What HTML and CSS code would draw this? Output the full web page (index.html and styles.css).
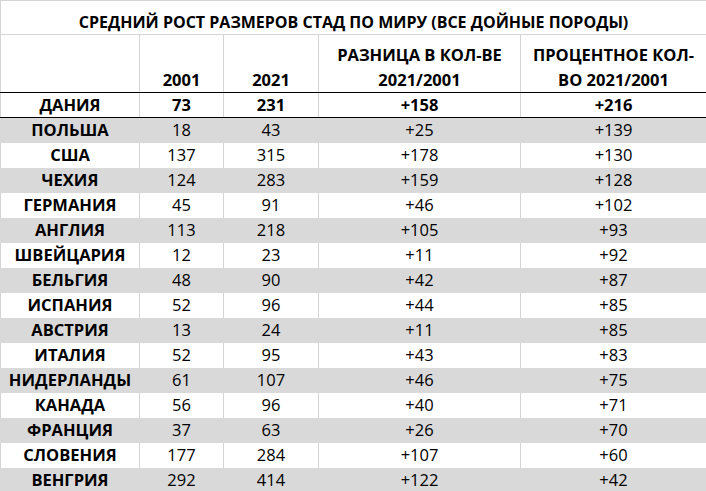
FILE: index.html
```html
<!DOCTYPE html>
<html lang="ru">
<head>
<meta charset="utf-8">
<title>Средний рост размеров стад</title>
<link rel="stylesheet" href="styles.css">
</head>
<body>
<table class="sheet">
  <colgroup>
    <col class="c1"><col class="c2"><col class="c3"><col class="c4"><col class="c5">
  </colgroup>
  <thead>
    <tr class="title-row"><th colspan="5">СРЕДНИЙ РОСТ РАЗМЕРОВ СТАД ПО МИРУ (ВСЕ ДОЙНЫЕ ПОРОДЫ)</th></tr>
    <tr class="head-row">
      <th></th>
      <th>2001</th>
      <th>2021</th>
      <th>РАЗНИЦА В КОЛ-ВЕ<br>2021/2001</th>
      <th>ПРОЦЕНТНОЕ КОЛ-<br>ВО 2021/2001</th>
    </tr>
  </thead>
  <tbody>
    <tr class="lead"><th>ДАНИЯ</th><td>73</td><td>231</td><td>+158</td><td>+216</td></tr>
    <tr class="alt"><th>ПОЛЬША</th><td>18</td><td>43</td><td>+25</td><td>+139</td></tr>
    <tr><th>США</th><td>137</td><td>315</td><td>+178</td><td>+130</td></tr>
    <tr class="alt"><th>ЧЕХИЯ</th><td>124</td><td>283</td><td>+159</td><td>+128</td></tr>
    <tr><th>ГЕРМАНИЯ</th><td>45</td><td>91</td><td>+46</td><td>+102</td></tr>
    <tr class="alt"><th>АНГЛИЯ</th><td>113</td><td>218</td><td>+105</td><td>+93</td></tr>
    <tr><th>ШВЕЙЦАРИЯ</th><td>12</td><td>23</td><td>+11</td><td>+92</td></tr>
    <tr class="alt"><th>БЕЛЬГИЯ</th><td>48</td><td>90</td><td>+42</td><td>+87</td></tr>
    <tr><th>ИСПАНИЯ</th><td>52</td><td>96</td><td>+44</td><td>+85</td></tr>
    <tr class="alt"><th>АВСТРИЯ</th><td>13</td><td>24</td><td>+11</td><td>+85</td></tr>
    <tr><th>ИТАЛИЯ</th><td>52</td><td>95</td><td>+43</td><td>+83</td></tr>
    <tr class="alt"><th>НИДЕРЛАНДЫ</th><td>61</td><td>107</td><td>+46</td><td>+75</td></tr>
    <tr><th>КАНАДА</th><td>56</td><td>96</td><td>+40</td><td>+71</td></tr>
    <tr class="alt"><th>ФРАНЦИЯ</th><td>37</td><td>63</td><td>+26</td><td>+70</td></tr>
    <tr><th>СЛОВЕНИЯ</th><td>177</td><td>284</td><td>+107</td><td>+60</td></tr>
    <tr class="alt last"><th>ВЕНГРИЯ</th><td>292</td><td>414</td><td>+122</td><td>+42</td></tr>
  </tbody>
</table>
</body>
</html>
```
FILE: styles.css
```css
html, body {
  margin: 0;
  padding: 0;
  background: #ffffff;
}

.sheet {
  border-collapse: collapse;
  table-layout: fixed;
  width: 706px;
  font-family: "Open Sans", "Noto Sans", sans-serif;
  font-size: 16.5px;
  color: #000000;
  border-top: 1px solid #d4d4d4;
  border-left: 1px solid #d4d4d4;
}

.c1 { width: 139px; }
.c2 { width: 84px; }
.c3 { width: 95px; }
.c4 { width: 202px; }
.c5 { width: 186px; }

.sheet th,
.sheet td {
  padding: 0;
  text-align: center;
  white-space: nowrap;
  border-left: 1px solid #d4d4d4;
  border-right: 1px solid #d4d4d4;
}

.sheet th { font-weight: 700; }
.sheet td { font-weight: 400; }

.title-row th {
  height: 32px;
  font-size: 16px;
  line-height: 22px;
  vertical-align: bottom;
  padding-bottom: 1px;
  border-bottom: 1px solid #d4d4d4;
}

.head-row th {
  height: 57px;
  line-height: 25px;
  vertical-align: bottom;
  border-bottom: 1px solid #000000;
}

tbody tr { height: 25px; }

tbody th,
tbody td {
  line-height: 24px;
  vertical-align: middle;
  padding-top: 1px;
}

.lead td { font-weight: 700; }
.lead th,
.lead td { border-bottom: 1px solid #000000; }

.alt th,
.alt td {
  background: #d9d9d9;
  border-left-color: #d9d9d9;
  border-right-color: #d9d9d9;
}

.alt td:last-child { border-right-color: #d4d4d4; }

.last th,
.last td { border-bottom: 1px solid #000000; }
```
